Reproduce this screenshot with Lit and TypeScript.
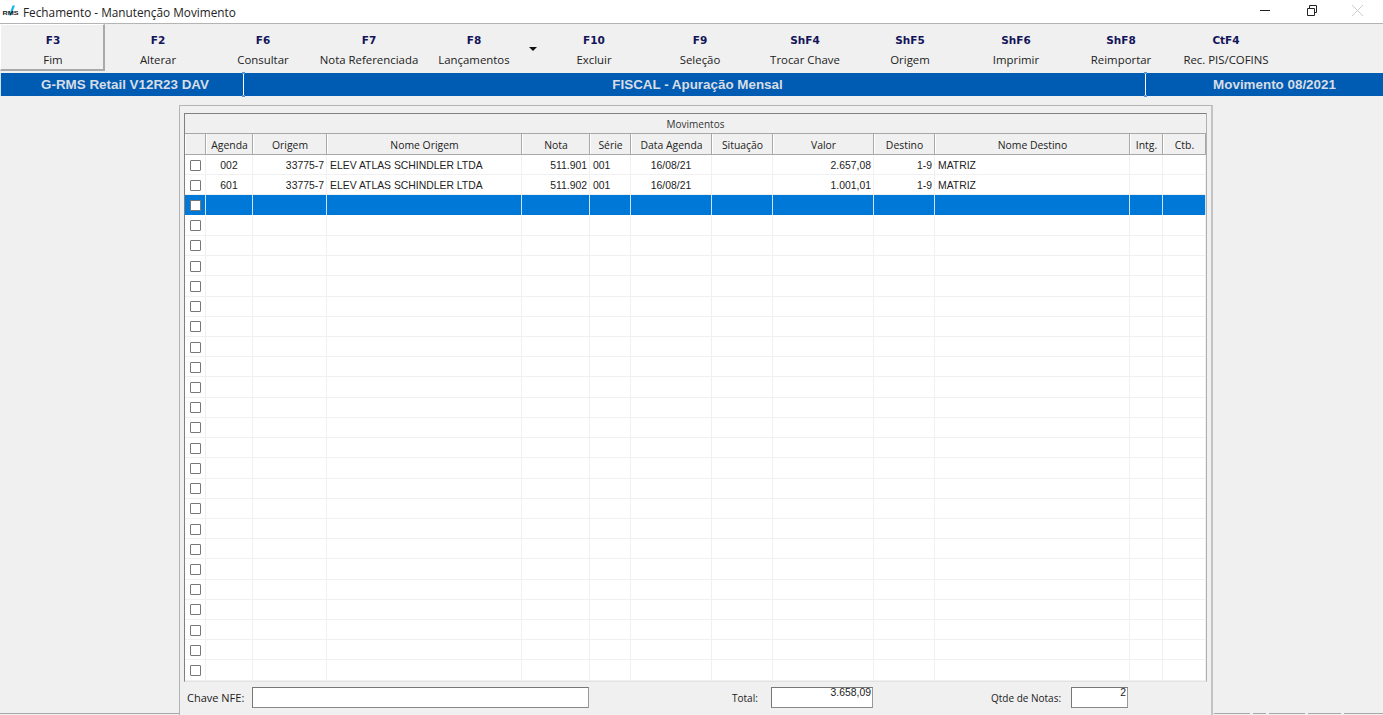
import { LitElement, html, css, svg } from "lit";
import { customElement } from "lit/decorators.js";

const tools: [string, string, number][] = [
  ["F3", "Fim", 105],
  ["F2", "Alterar", 106],
  ["F6", "Consultar", 104],
  ["F7", "Nota Referenciada", 108],
  ["F8", "Lançamentos", 117],
  ["F10", "Excluir", 108],
  ["F9", "Seleção", 104],
  ["ShF4", "Trocar Chave", 106],
  ["ShF5", "Origem", 104],
  ["ShF6", "Imprimir", 108],
  ["ShF8", "Reimportar", 102],
  ["CtF4", "Rec. PIS/COFINS", 108],
];

const cols: [string, number, string][] = [
  ["", 21, "c"],
  ["Agenda", 47, "c"],
  ["Origem", 74, "r"],
  ["Nome Origem", 195, "l"],
  ["Nota", 68, "r"],
  ["Série", 41, "l"],
  ["Data Agenda", 81, "c"],
  ["Situação", 61, "c"],
  ["Valor", 101, "r"],
  ["Destino", 61, "r"],
  ["Nome Destino", 195, "l"],
  ["Intg.", 33, "c"],
  ["Ctb.", 43, "c"],
];

const rows: string[][] = [
  ["", "002", "33775-7", "ELEV ATLAS SCHINDLER LTDA", "511.901", "001", "16/08/21", "", "2.657,08", "1-9", "MATRIZ", "", ""],
  ["", "601", "33775-7", "ELEV ATLAS SCHINDLER LTDA", "511.902", "001", "16/08/21", "", "1.001,01", "1-9", "MATRIZ", "", ""],
];
for (let i = 0; i < 24; i++) rows.push(Array(13).fill(""));

const segments = [36, 13, 36, 33, 40];

@customElement("app-root")
export class AppRoot extends LitElement {
  static styles = css`
    :host { display: block; width: 1383px; height: 715px; overflow: hidden; background: #f0f0f0;
      font-family: "Liberation Sans", Arial, sans-serif; color: #111; }
    .title { height: 23px; background: #fff; border-bottom: 1px solid #b4b4b4; display: flex; align-items: center; }
    .logo { width: 18px; height: 14px; margin: 0 4px 0 1px; flex: none; }
    .title-text { font: 11.8px "Open Sans", "Liberation Sans", sans-serif; color: #222; flex: 1; }
    .winbtns { display: flex; align-items: center; margin-top: -5px; }
    .winbtns svg { display: block; }
    .toolbar { height: 48px; display: flex; background: #f0f0f0; }
    .tool { box-sizing: border-box; display: flex; flex-direction: column; align-items: center; position: relative; padding-top: 9px; }
    .tool.first { border-right: 2px solid #a9a9a9; border-bottom: 2px solid #a9a9a9; border-top: 1px solid #fff; border-left: 1px solid #fff; padding: 8px 0 0 2px; height: 47px; }
    .tool.menu { padding-right: 15px; }
    .key { font: bold 10.5px "DejaVu Sans", "Liberation Sans", sans-serif; color: #14145a; line-height: 14px; }
    .cap { font: 11.4px "Open Sans", "Liberation Sans", sans-serif; color: #222; line-height: 16px; margin-top: 5px; white-space: nowrap; }
    .arrow { position: absolute; right: 3px; top: 23px; width: 0; height: 0; border-left: 4px solid transparent; border-right: 4px solid transparent; border-top: 4px solid #111; }
    .banner { margin-top: 1px; height: 23px; background: #005cb2; color: #d9dde6; font: bold 13.4px "Liberation Sans", sans-serif; display: grid; grid-template-columns: 242px 903px 1fr; box-sizing: border-box; border-left: 1px solid #cfe0f2; }
    .banner > div { display: flex; align-items: center; justify-content: center; position: relative; }
    .banner > .mid { border-left: 1px solid #fff; border-right: 1px solid #fff; }
    .banner .a { padding-left: 6px; }
    .banner .m { padding-left: 6px; }
    .banner .r { padding-left: 20px; }
    .dot { position: absolute; width: 3px; height: 2px; background: #5a9ad6; }
    .dot.tl { left: -2px; top: -1px; }
    .dot.bl { left: -2px; bottom: -1px; }
    .dot.tr { right: -2px; top: -1px; }
    .dot.br { right: -2px; bottom: -1px; }
    .main { display: flex; height: 619px; }
    .side-l { box-sizing: border-box; width: 179px; height: 618px; flex: none; border-bottom: 1px solid #a8a8a8; }
    .side-r { box-sizing: border-box; height: 618px; flex: 1; display: flex; align-items: flex-end; gap: 3px; padding-left: 1px; }
    .seg { height: 1px; background: #a8a8a8; flex: none; }
    .seg.last { flex: 1; }
    .panel { box-sizing: border-box; flex: none; width: 1034px; height: 610px; margin-top: 9px; border: 1px solid #b4b4b4; border-bottom: none; border-right: 2px solid #c4c4c4; padding: 7px 4px 0 4px; background: #f0f0f0; }
    .grid { box-sizing: border-box; width: 1023px; border: 1px solid #808080; border-bottom-color: #e2e2e2; border-right-color: #b0b0b0; background: #fff; }
    .group { height: 19px; background: #f0f0f0; border-bottom: 1px solid #a8a8a8; font: 10px "Open Sans", "Liberation Sans", sans-serif; color: #333; display: flex; align-items: center; justify-content: center; }
    .head { display: flex; height: 20px; background: #f0f0f0; border-bottom: 1px solid #a8a8a8; }
    .hc { box-sizing: border-box; flex: none; border-right: 1px solid #a8a8a8; border-left: 1px solid #fff; font: 10.4px "Open Sans", "Liberation Sans", sans-serif; color: #222; display: flex; align-items: center; justify-content: center; white-space: nowrap; padding-top: 1px; }
    .row { display: flex; height: 20.22px; box-sizing: border-box; border-bottom: 1px solid #f0f0f0; background: #fff; }
    .row.sel { background: #0078d7; border-bottom-color: #fff; }
    .c { box-sizing: border-box; flex: none; border-right: 1px solid #f0f0f0; font: 10.4px "Liberation Sans", sans-serif; color: #222; display: flex; align-items: center; padding: 1px 2px 0 3px; white-space: nowrap; overflow: hidden; }
    .sel .c { border-right-color: #cfe4f7; }
    .c.t-c { justify-content: center; padding: 1px 0 0 0; }
    .c.t-r { justify-content: flex-end; }
    .cb { box-sizing: border-box; width: 11px; height: 11px; border: 1px solid #777; background: #fff; border-radius: 1px; }
    .foot { height: 32px; font: 10px "Open Sans", "Liberation Sans", sans-serif; color: #222; display: flex; align-items: center; }
    .lbl { white-space: nowrap; }
    .field { box-sizing: border-box; height: 21px; background: #fff; border: 1px solid #777; border-right-color: #999; border-bottom-color: #888; font: 10.4px "Liberation Sans", sans-serif; text-align: right; line-height: 10px; padding-right: 1px; color: #222; }
    .l1 { margin-left: 3px; width: 65px; font-size: 11px; }
    .f1 { width: 337px; }
    .l2 { margin-left: 143px; width: 39px; }
    .f2 { width: 102px; }
    .l3 { margin-left: 118px; width: 80px; }
    .f3 { width: 57px; }
  `;

  private logo() {
    return svg`<svg class="logo" viewBox="0 0 18 14">
      <path d="M8 10.5 L11.5 0.5 L14 0.5 L10 10.5Z" fill="#19b5e8"/>
      <text x="1.5" y="9.5" font-family="Liberation Sans" font-size="6" font-weight="bold" fill="#111" textLength="16" lengthAdjust="spacingAndGlyphs">RMS</text>
    </svg>`;
  }

  render() {
    return html`
      <div class="title">
        ${this.logo()}
        <div class="title-text">Fechamento - Manutenção Movimento</div>
        <div class="winbtns">
          <svg width="123" height="16" viewBox="0 0 123 16">
            <path d="M0 9.5H10" stroke="#222" fill="none"/>
            <path d="M47.5 7.5h7v7h-7z M49.5 7.5v-3h7v7h-2" stroke="#222" fill="none"/>
            <path d="M92 4L103 15M103 4L92 15" stroke="#ccc" fill="none"/>
          </svg>
        </div>
      </div>
      <div class="toolbar">
        ${tools.map((t, i) => html`
          <div class="tool ${i === 0 ? "first" : ""} ${t[0] === "F8" ? "menu" : ""}" style="width:${t[2]}px">
            <div class="key">${t[0]}</div>
            <div class="cap">${t[1]}</div>
            ${t[0] === "F8" ? html`<div class="arrow"></div>` : ""}
          </div>`)}
      </div>
      <div class="banner">
        <div class="a">G-RMS Retail V12R23 DAV</div>
        <div class="mid m">
          <span class="dot tl"></span><span class="dot bl"></span>
          FISCAL - Apuração Mensal
          <span class="dot tr"></span><span class="dot br"></span>
        </div>
        <div class="r">Movimento 08/2021</div>
      </div>
      <div class="main">
        <div class="side-l"></div>
        <div class="panel">
          <div class="grid">
            <div class="group"><span>Movimentos</span></div>
            <div class="head">
              ${cols.map(c => html`<div class="hc" style="width:${c[1]}px">${c[0]}</div>`)}
            </div>
            ${rows.map((r, ri) => html`
              <div class="row ${ri === 2 ? "sel" : ""}">
                ${r.map((v, i) => html`
                  <div class="c t-${cols[i][2]}" style="width:${cols[i][1]}px">
                    ${i === 0 ? html`<div class="cb"></div>` : v}
                  </div>`)}
              </div>`)}
          </div>
          <div class="foot">
            <span class="lbl l1">Chave NFE:</span><div class="field f1"></div>
            <span class="lbl l2">Total:</span><div class="field f2">3.658,09</div>
            <span class="lbl l3">Qtde de Notas:</span><div class="field f3">2</div>
          </div>
        </div>
        <div class="side-r">
          ${segments.map((w, i) => html`<div class="seg ${i === segments.length - 1 ? "last" : ""}" style="width:${w}px"></div>`)}
        </div>
      </div>
    `;
  }
}
